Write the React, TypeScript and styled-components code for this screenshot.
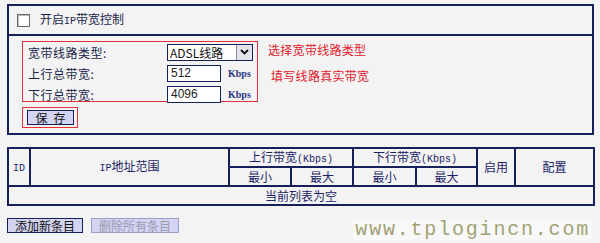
import React from "react";
import styled, { createGlobalStyle } from "styled-components";

const Global = createGlobalStyle`
  html, body { margin: 0; padding: 0; background: #f3f3f3; }
  body { font-family: "Noto Sans CJK SC", "Noto Sans", sans-serif; font-size: 12px; color: #1b1f4a; }
  * { box-sizing: border-box; }
`;

const NAVY = "#16205a";
const RED = "#e3303c";

const Page = styled.div`
  position: relative;
  width: 600px;
  height: 243px;
  padding: 4px 0 0 7px;
  overflow: hidden;
`;

const Panel = styled.div`
  width: 587px;
  height: 131px;
  border: 2px solid ${NAVY};
  display: flex;
  flex-direction: column;
`;

const PanelHead = styled.div`
  height: 30px;
  border-bottom: 2px solid ${NAVY};
  display: flex;
  align-items: center;
  padding-left: 8px;
  gap: 10px;
  line-height: 1;
`;

const CheckBox = styled.span`
  width: 13px;
  height: 13px;
  background: #fff;
  border: 1px solid #6a6a6a;
  box-shadow: inset 1px 1px 0 #bdbdbd;
`;

const HeadLabel = styled.span`
  font-size: 12px;
  color: #1b1f4a;
`;

const PanelBody = styled.div`
  padding: 5px 0 0 13px;
  display: flex;
  flex-direction: column;
  gap: 5px;
`;

const SettingsRow = styled.div`
  display: flex;
  gap: 10px;
`;

const RedBox = styled.div`
  width: 236px;
  height: 61px;
  border: 1px solid ${RED};
  padding: 0 0 0 5px;
  display: grid;
  grid-template-columns: 139px auto;
  grid-auto-rows: 20px;
  row-gap: 1px;
  align-items: center;
`;

const FieldLabel = styled.span`
  font-size: 12px;
  color: #1b1f4a;
  letter-spacing: 0.5px;
`;

const Control = styled.div`
  display: flex;
  align-items: center;
  gap: 7px;
`;

const Select = styled.div`
  width: 86px;
  height: 17px;
  background: #fff;
  border: 1px solid ${NAVY};
  display: flex;
  align-items: stretch;
  font-size: 12px;
  color: #111;
`;

const SelectText = styled.span`
  flex: 1;
  padding-left: 2px;
  line-height: 15px;
`;

const SelectArrow = styled.span`
  width: 16px;
  background: #e4e4ec;
  border-left: 1px solid #8a8aa0;
  display: flex;
  align-items: center;
  justify-content: center;
`;

const TextInput = styled.div`
  width: 54px;
  height: 17px;
  background: #fff;
  border: 1px solid ${NAVY};
  padding-left: 3px;
  font-family: "Liberation Sans", sans-serif;
  font-size: 12px;
  line-height: 15px;
  color: #222;
`;

const Unit = styled.span`
  font-family: "Liberation Serif", serif;
  font-weight: bold;
  font-size: 10px;
  color: #2a3580;
`;

const Notes = styled.div`
  display: flex;
  flex-direction: column;
`;

const Note = styled.span<{ $indent?: number; $mt?: number }>`
  color: #e0202c;
  font-size: 12px;
  margin-left: ${(p) => p.$indent ?? 0}px;
  margin-top: ${(p) => p.$mt ?? 0}px;
  letter-spacing: 0.3px;
`;

const SaveWrap = styled.div`
  width: 56px;
  height: 21px;
  border: 1px solid ${RED};
  padding: 2px 3px 2px 4px;
  display: flex;
`;

const SaveButton = styled.div`
  flex: 1;
  background: #d3d3f2;
  border: 1px solid ${NAVY};
  display: flex;
  align-items: center;
  justify-content: center;
  font-size: 12px;
  color: #111;
  letter-spacing: 6px;
  padding-left: 6px;
`;

const Table = styled.table`
  margin-top: 12px;
  width: 586px;
  border-collapse: collapse;
  border: 2px solid ${NAVY};
  table-layout: fixed;
`;

const Cell = styled.td`
  border: 2px solid ${NAVY};
  height: 19px;
  padding: 0;
  text-align: center;
  font-size: 12px;
  color: #1b2466;
  line-height: 1;
  vertical-align: middle;
`;

const Mono = styled.span`
  font-family: "Liberation Mono", monospace;
  font-size: 10px;
`;

const ButtonRow = styled.div`
  margin-top: 12px;
  display: flex;
  gap: 8px;
`;

const ActionButton = styled.div<{ $disabled?: boolean }>`
  height: 15px;
  padding: 0 7px;
  background: #d3d3f2;
  border: 1px solid ${(p) => (p.$disabled ? "#9aa0c8" : NAVY)};
  color: ${(p) => (p.$disabled ? "#9a9ab0" : "#111")};
  font-size: 12px;
  line-height: 13px;
  display: flex;
  align-items: center;
`;

const Watermark = styled.div`
  position: absolute;
  right: 8px;
  bottom: 2px;
  font-family: "Liberation Mono", monospace;
  font-size: 20px;
  letter-spacing: 1.8px;
  line-height: 22px;
  color: #a2a274;
  background: rgba(250, 250, 250, 0.7);
  padding: 0 2px;
`;

export default function App() {
  return (
    <>
      <Global />
      <Page>
        <Panel>
          <PanelHead>
            <CheckBox />
            <HeadLabel>
              开启<Mono>IP</Mono>带宽控制
            </HeadLabel>
          </PanelHead>
          <PanelBody>
            <SettingsRow>
              <RedBox>
                <FieldLabel>宽带线路类型:</FieldLabel>
                <Select>
                  <SelectText>ADSL线路</SelectText>
                  <SelectArrow>
                    <svg width="9" height="6" viewBox="0 0 9 6">
                      <path d="M1 1 L4.5 4.5 L8 1" fill="none" stroke="#111" strokeWidth="1.8" />
                    </svg>
                  </SelectArrow>
                </Select>
                <FieldLabel>上行总带宽:</FieldLabel>
                <Control>
                  <TextInput>512</TextInput>
                  <Unit>Kbps</Unit>
                </Control>
                <FieldLabel>下行总带宽:</FieldLabel>
                <Control>
                  <TextInput>4096</TextInput>
                  <Unit>Kbps</Unit>
                </Control>
              </RedBox>
              <Notes>
                <Note>选择宽带线路类型</Note>
                <Note $indent={3} $mt={9}>填写线路真实带宽</Note>
              </Notes>
            </SettingsRow>
            <SaveWrap>
              <SaveButton>保存</SaveButton>
            </SaveWrap>
          </PanelBody>
        </Panel>
        <Table>
          <colgroup>
            <col style={{ width: 22 }} />
            <col style={{ width: 199 }} />
            <col style={{ width: 62 }} />
            <col style={{ width: 62 }} />
            <col style={{ width: 63 }} />
            <col style={{ width: 61 }} />
            <col style={{ width: 38 }} />
            <col style={{ width: 79 }} />
          </colgroup>
          <tbody>
            <tr>
              <Cell rowSpan={2}>
                <Mono>ID</Mono>
              </Cell>
              <Cell rowSpan={2}>
                <Mono>IP</Mono>地址范围
              </Cell>
              <Cell colSpan={2}>
                上行带宽<Mono>(Kbps)</Mono>
              </Cell>
              <Cell colSpan={2}>
                下行带宽<Mono>(Kbps)</Mono>
              </Cell>
              <Cell rowSpan={2}>启用</Cell>
              <Cell rowSpan={2}>配置</Cell>
            </tr>
            <tr>
              <Cell>最小</Cell>
              <Cell>最大</Cell>
              <Cell>最小</Cell>
              <Cell>最大</Cell>
            </tr>
            <tr>
              <Cell colSpan={8}>当前列表为空</Cell>
            </tr>
          </tbody>
        </Table>
        <ButtonRow>
          <ActionButton>添加新条目</ActionButton>
          <ActionButton $disabled>删除所有条目</ActionButton>
        </ButtonRow>
        <Watermark>www.tplogincn.com</Watermark>
      </Page>
    </>
  );
}
